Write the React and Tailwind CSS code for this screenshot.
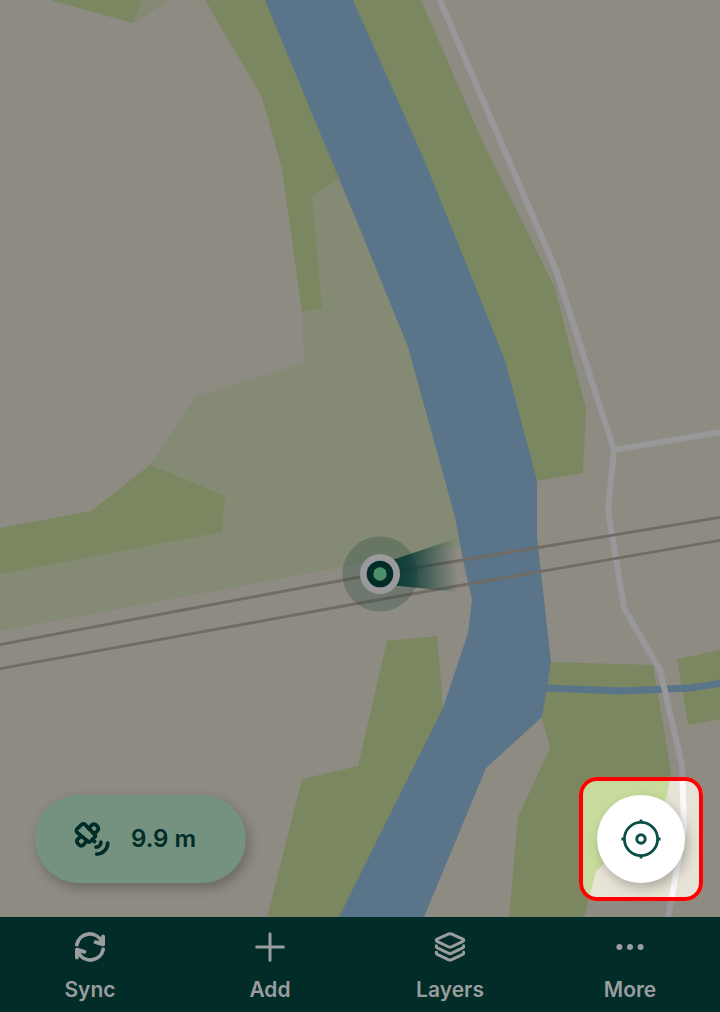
const WOODS = [
  '50,0 133,23 141,0',
  '205,0 262,97 282,169 302,312 322,308 312,196 342,176 270,0',
  '350,0 421,0 480,136 555,288 573,360 586,408 583,473 537,481 500,360',
  '0,528 91,511 150,465 225,496 222,532 0,574',
  '387,641 437,636 443,708 360,917 267,917 302,779 358,766',
  '551,662 653,665 671,772 667,796 655,818 596,871 584,917 509,917 518,817 550,748 541,715',
  '677,659 720,650 720,719 688,725',
];

const MEADOWS = [
  '133,23 141,0 170,0',
  '342,176 312,196 322,308 302,312 304,363 195,397 150,465 225,496 222,532 0,574 0,631 320,571 470,544 456,520 412,348',
];

const RIVER =
  '265,0 353,0 423,157 505,360 537,481 537,537 551,662 542,717 486,768 424,917 339,917 443,708 468,633 472,600 463,560 455,517 408,347 360,229';

function MapCanvas() {
  return (
    <svg
      className="absolute inset-0 h-full w-full"
      viewBox="0 0 720 917"
      preserveAspectRatio="xMaxYMax slice"
      role="img"
      aria-label="Map"
    >
      <defs>
        <linearGradient id="heading" gradientUnits="userSpaceOnUse" x1="394" y1="572" x2="458" y2="570">
          <stop offset="0" stopColor="#0a3c35" />
          <stop offset="0.25" stopColor="#0a3c35" stopOpacity="0.85" />
          <stop offset="1" stopColor="#0a3c35" stopOpacity="0" />
        </linearGradient>
      </defs>
      <rect width="720" height="917" fill="#8e8b83" />
      {MEADOWS.map((points) => (
        <polygon key={points} points={points} fill="#848a73" />
      ))}
      {WOODS.map((points) => (
        <polygon key={points} points={points} fill="#7a8760" />
      ))}
      <polygon points={RIVER} fill="#5a758a" />
      <path d="M546 688 L622 691 L691 688 L722 683" fill="none" stroke="#5a758a" strokeWidth="7" />
      <g fill="none" stroke="#98989a" strokeWidth="6" strokeLinejoin="round">
        <path d="M439 -2 L556 270 L614 450 L608 510 L624 608 L660 670 L682 765 L684 827 L668 919" />
        <path d="M614 450 L722 432" />
      </g>
      <g fill="none" stroke="#726b64" strokeWidth="2.8">
        <path d="M-2 645 L183 610 L360 577 L463 560 L722 517" />
        <path d="M-2 669 L360 603 L463 585 L722 540" />
      </g>
      <circle cx="380" cy="574" r="37.6" fill="#134034" fillOpacity="0.25" />
      <path d="M380 564 L458 538 V592 L380 584Z" fill="url(#heading)" />
      <circle cx="380" cy="574" r="20" fill="#9a999b" />
      <circle cx="380" cy="574" r="13.3" fill="#022c28" />
      <circle cx="380" cy="574" r="6.7" fill="#4c8f68" />
    </svg>
  );
}

function SatelliteIcon() {
  return (
    <svg
      className="size-[42px]"
      viewBox="0 0 24 24"
      fill="none"
      stroke="currentColor"
      strokeWidth="2.1"
      strokeLinecap="round"
      strokeLinejoin="round"
      aria-hidden="true"
    >
      <path d="M3.5 6.2 6 3.8a1.5 1.5 0 0 1 2.1 0l5.5 5.7a1 1 0 0 1 0 1.4l-2.5 2.5a1 1 0 0 1-1.4 0L3.5 8.3a1.5 1.5 0 0 1 0-2.1Z" />
      <path d="M5.8 10.6 3.9 12a1.9 1.9 0 0 0-.1 2.4l.8.9a1.9 1.9 0 0 0 2.5 0L9 13.2" />
      <path d="m10.2 6 1.6-1.9a1.9 1.9 0 0 1 2.5-.1l.8.8a1.9 1.9 0 0 1 0 2.5L13.2 9" />
      <path d="m12.2 12.2 1.3 1.3" />
      <path d="M14.3 16.6a2.8 2.8 0 0 0 2.8-2.8" />
      <path d="M14.7 20.6a6.3 6.3 0 0 0 6.3-6.3" />
    </svg>
  );
}

function LocateIcon() {
  return (
    <svg className="size-10" viewBox="0 0 40 40" fill="none" stroke="currentColor" strokeWidth="2.8" aria-hidden="true">
      <circle cx="20" cy="20" r="16.6" />
      <circle cx="20" cy="20" r="4.2" strokeWidth="3" />
      <path d="M20 .4v3.4M20 36.2v3.4M.4 20h3.4M36.2 20h3.4" />
    </svg>
  );
}

function NavIcon({ children, strokeWidth }) {
  return (
    <svg
      className="size-8"
      viewBox="0 0 32 32"
      fill="none"
      stroke="currentColor"
      strokeWidth={strokeWidth}
      strokeLinecap="round"
      strokeLinejoin="round"
      aria-hidden="true"
    >
      {children}
    </svg>
  );
}

const NAV_ITEMS = [
  {
    label: 'Sync',
    icon: (
      <NavIcon strokeWidth="3.8">
        <path d="M2.8 13.6A13.2 13.2 0 0 1 27.6 10.4" />
        <path d="M29.1 5.4v8l-7.6-2.2" />
        <path d="M29.2 18.4A13.2 13.2 0 0 1 4.4 21.6" />
        <path d="M2.9 26.6v-8l7.6 2.2" />
      </NavIcon>
    ),
  },
  {
    label: 'Add',
    icon: (
      <NavIcon strokeWidth="3">
        <path d="M16 2.7v26.6M2.7 16h26.6" />
      </NavIcon>
    ),
  },
  {
    label: 'Layers',
    icon: (
      <NavIcon strokeWidth="3">
        <path d="M3.1 8.1 14.8 2.9Q16 2.4 17.2 2.9L28.9 8.1Q30.6 9.2 28.9 10.4L17.2 16Q16 16.6 14.8 16L3.1 10.4Q1.4 9.2 3.1 8.1Z" />
        <path d="M2.4 14.8Q2 16.2 3.3 16.9L14.8 22.4Q16 23 17.2 22.4L28.7 16.9Q30 16.2 29.6 14.8" />
        <path d="M2.4 21.2Q2 22.7 3.3 23.3L14.8 28.8Q16 29.4 17.2 28.8L28.7 23.3Q30 22.7 29.6 21.2" />
      </NavIcon>
    ),
  },
  {
    label: 'More',
    icon: (
      <NavIcon strokeWidth="6">
        <path d="M5.4 16h.01M16 16h.01M26.6 16h.01" />
      </NavIcon>
    ),
  },
];

export default function App() {
  return (
    <div className="flex min-h-screen flex-col font-['Inter',sans-serif]">
      <main className="relative flex flex-1 items-end justify-between overflow-hidden pr-[17px] pb-4 pl-[35px]">
        <MapCanvas />
        <button
          type="button"
          className="relative mb-[18px] flex h-[88px] items-center gap-[18px] rounded-full bg-[#759180] pr-[50px] pl-9 text-2xl leading-8 font-semibold text-[#022c28] shadow-[3px_5px_12px_rgba(0,0,0,0.25)]"
        >
          <SatelliteIcon />
          <span>9.9 m</span>
        </button>
        <div className="relative rounded-[18px] border-4 border-[#ff0000] p-3.5 backdrop-brightness-[1.63]">
          <button
            type="button"
            aria-label="Show my location"
            className="flex size-[88px] items-center justify-center rounded-full bg-white text-[#0b4f47] shadow-[3px_5px_12px_rgba(0,0,0,0.25)]"
          >
            <LocateIcon />
          </button>
        </div>
      </main>
      <nav className="grid grid-cols-4 bg-[#022c28] text-[#9a9d9d]">
        {NAV_ITEMS.map(({ label, icon }) => (
          <button
            key={label}
            type="button"
            className="flex flex-col items-center gap-[15px] pt-3.5 pb-2.5 text-[21px] leading-6 font-semibold"
          >
            {icon}
            <span>{label}</span>
          </button>
        ))}
      </nav>
    </div>
  );
}
